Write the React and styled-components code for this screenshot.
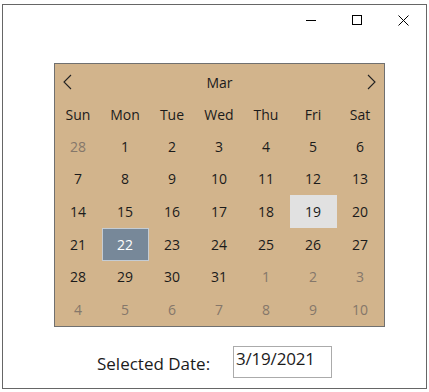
import React from 'react';
import styled, { createGlobalStyle } from 'styled-components';

const Global = createGlobalStyle`
  html, body {
    margin: 0;
    padding: 0;
    background: #ffffff;
  }
  body {
    font-family: "Open Sans", "Noto Sans", sans-serif;
    color: #1b1b1b;
  }
`;

const Page = styled.div`
  width: 429px;
  height: 392px;
  padding: 4px 2px 0 2px;
  box-sizing: border-box;
`;

const Window = styled.div`
  width: 425px;
  height: 385px;
  box-sizing: border-box;
  border: 1px solid #666666;
  background: #fff;
  display: flex;
  flex-direction: column;
`;

const TitleBar = styled.div`
  height: 30px;
  display: flex;
  justify-content: flex-end;
`;

const CaptionButton = styled.div`
  width: 46px;
  height: 30px;
  display: flex;
  align-items: center;
  justify-content: center;
`;

const Calendar = styled.div`
  margin: 28px 0 0 51px;
  width: 331px;
  height: 264px;
  box-sizing: border-box;
  border: 1px solid #707070;
  background: #d2b48c;
  display: grid;
  grid-template-columns: repeat(7, 47px);
  grid-template-rows: 34px 32px repeat(6, 1fr);
`;

const Header = styled.div`
  grid-column: 1 / 8;
  display: flex;
  align-items: center;
  justify-content: space-between;
  padding: 2px 8px 0 8px;
  font-size: 14px;
`;

const Cell = styled.div`
  display: flex;
  align-items: center;
  justify-content: center;
  font-size: 14px;
  box-sizing: border-box;
  padding-right: 1px;
  color: ${p => (p.$muted ? '#85776a' : p.$selected ? '#ffffff' : '#1b1b1b')};
  background: ${p => (p.$selected ? '#778899' : p.$today ? '#e1e1e1' : 'transparent')};
  border: 1px solid ${p => (p.$selected ? '#c4ccd4' : 'transparent')};
`;

const Footer = styled.div`
  margin: 19px 0 0 94px;
  display: flex;
  align-items: center;
`;

const Label = styled.span`
  font-size: 17px;
  width: 136px;
  padding-top: 2px;
`;

const TextBox = styled.div`
  width: 99px;
  height: 32px;
  box-sizing: border-box;
  border: 1px solid #ababab;
  font-size: 17px;
  padding: 0 0 0 2px;
  line-height: 24px;
  letter-spacing: -0.2px;
`;

const Chevron = ({ dir }) => (
  <svg width="10" height="16" viewBox="0 0 10 16">
    <polyline
      points={dir === 'left' ? '8,1 1,8 8,15' : '2,1 9,8 2,15'}
      fill="none"
      stroke="#222"
      strokeWidth="1.1"
    />
  </svg>
);

const days = ['Sun', 'Mon', 'Tue', 'Wed', 'Thu', 'Fri', 'Sat'];

const weeks = [
  [28, 1, 2, 3, 4, 5, 6],
  [7, 8, 9, 10, 11, 12, 13],
  [14, 15, 16, 17, 18, 19, 20],
  [21, 22, 23, 24, 25, 26, 27],
  [28, 29, 30, 31, 1, 2, 3],
  [4, 5, 6, 7, 8, 9, 10],
];

export default function App() {
  return (
    <Page>
      <Global />
      <Window>
        <TitleBar>
          <CaptionButton>
            <svg width="10" height="10" viewBox="0 0 10 10">
              <line x1="0" y1="5.5" x2="10" y2="5.5" stroke="#000" strokeWidth="1" />
            </svg>
          </CaptionButton>
          <CaptionButton>
            <svg width="10" height="10" viewBox="0 0 10 10">
              <rect x="0.5" y="0.5" width="9" height="9" fill="none" stroke="#000" strokeWidth="1" />
            </svg>
          </CaptionButton>
          <CaptionButton>
            <svg width="11" height="11" viewBox="0 0 11 11">
              <path d="M0.5 0.5 L10.5 10.5 M10.5 0.5 L0.5 10.5" stroke="#000" strokeWidth="1" />
            </svg>
          </CaptionButton>
        </TitleBar>

        <Calendar>
          <Header>
            <Chevron dir="left" />
            <span>Mar</span>
            <Chevron dir="right" />
          </Header>
          {days.map(d => (
            <Cell key={d}>{d}</Cell>
          ))}
          {weeks.map((week, w) =>
            week.map((n, i) => {
              const muted = (w === 0 && n > 20) || (w >= 4 && n < 15);
              return (
                <Cell
                  key={`${w}-${i}`}
                  $muted={muted}
                  $today={!muted && n === 19}
                  $selected={!muted && n === 22}
                >
                  {n}
                </Cell>
              );
            })
          )}
        </Calendar>

        <Footer>
          <Label>Selected Date:</Label>
          <TextBox>3/19/2021</TextBox>
        </Footer>
      </Window>
    </Page>
  );
}
